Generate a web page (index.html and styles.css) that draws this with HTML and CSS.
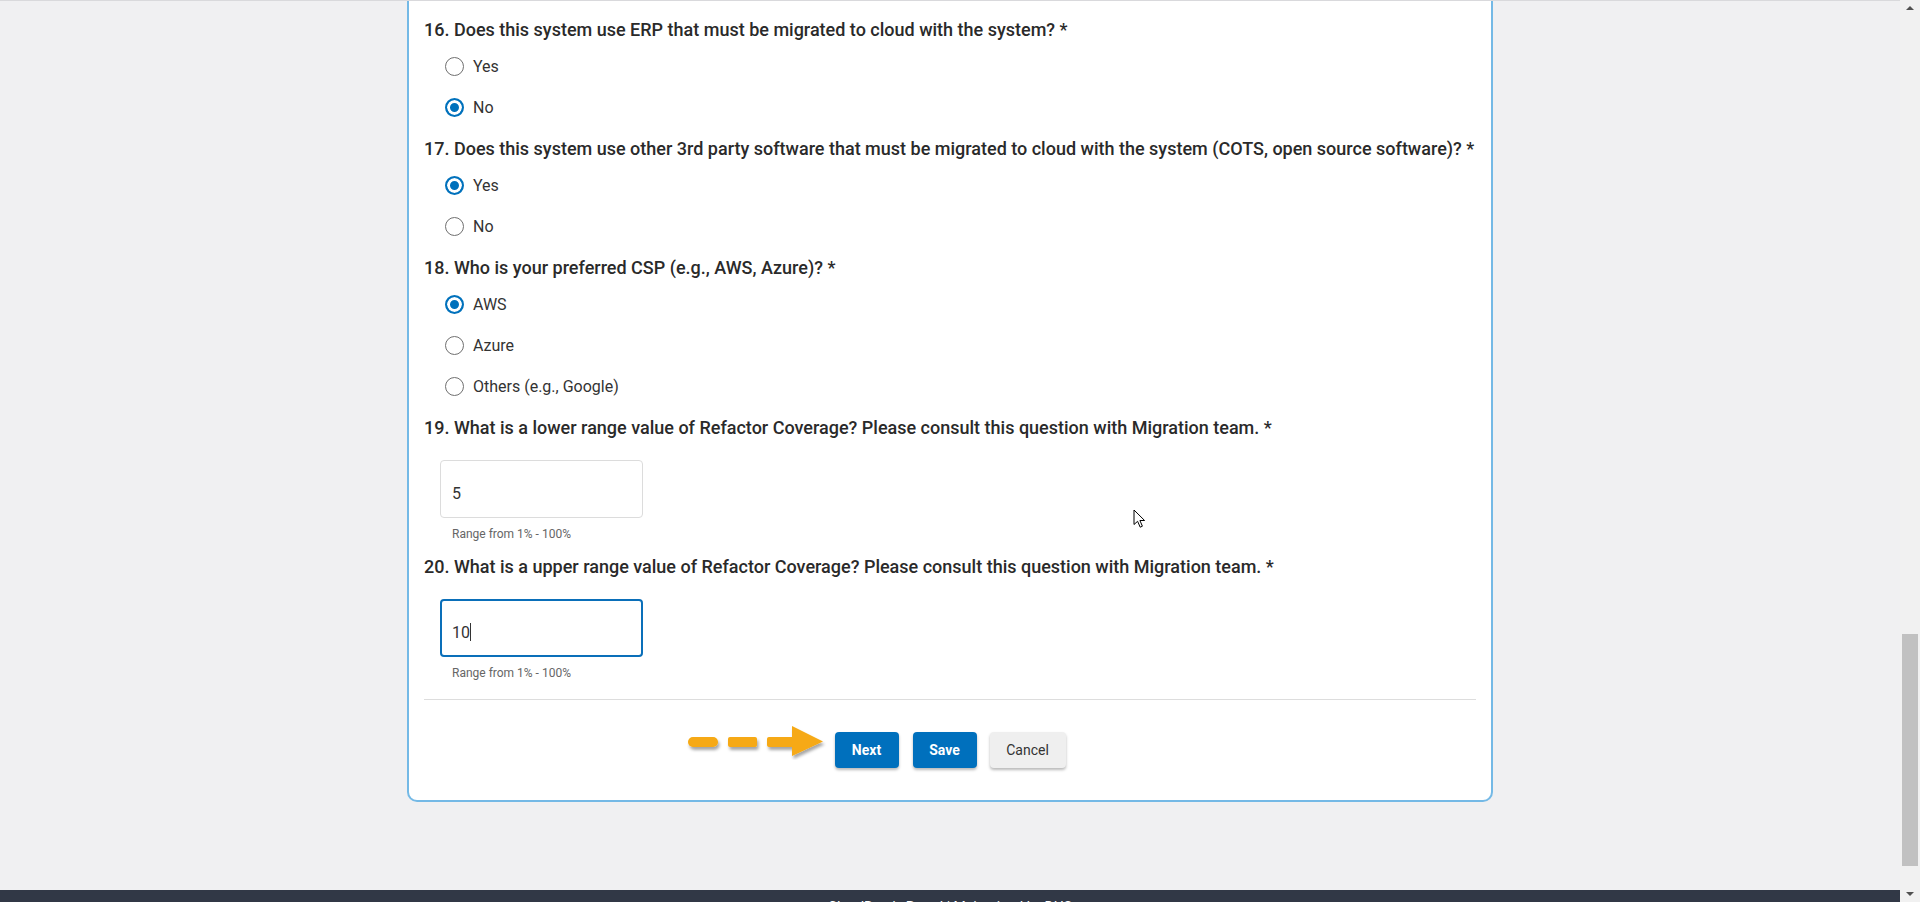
FILE: index.html
```html
<!DOCTYPE html>
<html lang="en">
<head>
<meta charset="utf-8">
<title>Questionnaire</title>
<link rel="stylesheet" href="styles.css">
</head>
<body>
<div class="viewport">
  <div class="page">
    <div class="topline"></div>
    <main class="main">
      <form class="card">
        <div class="question">
          <div class="q-label">16. Does this system use ERP that must be migrated to cloud with the system? *</div>
          <label class="option"><input type="radio" name="q16"><span>Yes</span></label>
          <label class="option"><input type="radio" name="q16" checked><span>No</span></label>
        </div>
        <div class="question">
          <div class="q-label">17. Does this system use other 3rd party software that must be migrated to cloud with the system (COTS, open source software)? *</div>
          <label class="option"><input type="radio" name="q17" checked><span>Yes</span></label>
          <label class="option"><input type="radio" name="q17"><span>No</span></label>
        </div>
        <div class="question">
          <div class="q-label">18. Who is your preferred CSP (e.g., AWS, Azure)? *</div>
          <label class="option"><input type="radio" name="q18" checked><span>AWS</span></label>
          <label class="option"><input type="radio" name="q18"><span>Azure</span></label>
          <label class="option"><input type="radio" name="q18"><span>Others (e.g., Google)</span></label>
        </div>
        <div class="question question-text q19">
          <div class="q-label">19. What is a lower range value of Refactor Coverage? Please consult this question with Migration team. *</div>
          <div class="textbox">5</div>
          <div class="hint">Range from 1% - 100%</div>
        </div>
        <div class="question question-text">
          <div class="q-label">20. What is a upper range value of Refactor Coverage? Please consult this question with Migration team. *</div>
          <div class="textbox focused">10<span class="caret"></span></div>
          <div class="hint">Range from 1% - 100%</div>
        </div>
        <div class="divider"></div>
        <div class="actions">
          <svg class="pointer-arrow" width="140" height="36" viewBox="0 0 140 36" aria-hidden="true">
            <defs>
              <filter id="sh" x="-10%" y="-30%" width="130%" height="180%">
                <feDropShadow dx="1.5" dy="3" stdDeviation="1.6" flood-color="#000" flood-opacity="0.35"/>
              </filter>
            </defs>
            <g fill="#f6a912" filter="url(#sh)">
              <rect x="1" y="13" width="30" height="10" rx="5"/>
              <rect x="41" y="13" width="29" height="10" rx="2"/>
              <rect x="80" y="13" width="28" height="10" rx="2"/>
              <path d="M105 2 L136 17.5 L105 32 Z"/>
            </g>
          </svg>
          <button type="button" class="btn btn-primary">Next</button>
          <button type="button" class="btn btn-primary">Save</button>
          <button type="button" class="btn btn-secondary">Cancel</button>
        </div>
        <svg class="cursor" width="14" height="20" viewBox="0 0 14 20" aria-hidden="true">
          <path d="M1 1 L1 15.5 L4.6 12.3 L7.2 18.2 L9.4 17.2 L6.9 11.5 L11.6 11.5 Z" fill="#fff" stroke="#000" stroke-width="1" stroke-linejoin="miter"/>
        </svg>
      </form>
    </main>
    <footer class="footer">CloudReady Portal | Maintained by DHS</footer>
  </div>
  <div class="scrollbar">
    <div class="sb-arrow sb-up"></div>
    <div class="sb-track"><div class="sb-thumb"></div></div>
    <div class="sb-arrow sb-down"></div>
  </div>
</div>
</body>
</html>
```

FILE: styles.css
```css
* { box-sizing: border-box; }

html, body {
  margin: 0;
  padding: 0;
  height: 902px;
  overflow: hidden;
  background: #f0f0f2;
  font-family: Roboto, "Liberation Sans", Arial, sans-serif;
  color: #222;
}

.viewport {
  display: flex;
  height: 902px;
}

.page {
  flex: 1;
  display: flex;
  flex-direction: column;
  min-width: 0;
}

.topline {
  height: 1px;
  background: #d9d9dc;
  flex: none;
}

.main {
  display: flex;
  justify-content: center;
  flex: none;
}

.card {
  position: relative;
  width: 1086px;
  margin: 0 0 88px;
  background: #fff;
  border: 2px solid #74b9e6;
  border-top: none;
  border-radius: 0 0 10px 10px;
  padding: 17px 15px 32px;
}

.question {
  margin-bottom: 9px;
}

.q-label {
  font-size: 18px;
  line-height: 24px;
  font-weight: 500;
  color: #2a2a2a;
  margin-bottom: 4px;
}

.option {
  display: flex;
  align-items: center;
  height: 41px;
  padding-left: 21px;
  font-size: 16px;
  color: #333;
}

.option input {
  appearance: none;
  -webkit-appearance: none;
  margin: 0 9px 0 0;
  width: 19px;
  height: 19px;
  border-radius: 50%;
  border: 1.5px solid #6f6f6f;
  background: #fff;
  flex: none;
}

.option input:checked {
  border: 2px solid #0071bc;
  background: #0071bc;
  box-shadow: inset 0 0 0 3px #fff;
}

.question-text .q-label {
  margin-bottom: 20px;
}

.q19 {
  margin-bottom: 14px;
}

.textbox {
  display: flex;
  align-items: center;
  margin-left: 16px;
  width: 203px;
  height: 58px;
  padding: 8px 0 0 11px;
  border: 1px solid #dcdcdc;
  border-radius: 4px;
  font-size: 16px;
  color: #333;
  background: #fff;
}

.textbox.focused {
  border: 2px solid #0a6fb9;
  padding: 8px 0 0 10px;
}

.caret {
  display: inline-block;
  width: 1px;
  height: 18px;
  background: #333;
}

.hint {
  margin: 9px 0 0 28px;
  font-size: 12px;
  line-height: 14px;
  color: #666;
}

.question-text:last-of-type {
  margin-bottom: 0;
}

.divider {
  height: 1px;
  background: #dddddd;
  margin-top: 19px;
}

.actions {
  position: relative;
  display: flex;
  justify-content: center;
  gap: 14px;
  margin-top: 32px;
}

.btn {
  height: 36px;
  border: none;
  border-radius: 4px;
  font-family: Roboto, "Liberation Sans", Arial, sans-serif;
  font-size: 14px;
  box-shadow: 0 2px 3px rgba(0, 0, 0, 0.28);
  padding: 0;
}

.btn-primary {
  width: 64px;
  background: #0070bd;
  color: #fff;
  font-weight: 700;
}

.btn-secondary {
  width: 76px;
  margin-left: -1px;
  background: #efefef;
  color: #333;
}

.pointer-arrow {
  position: absolute;
  left: 263px;
  top: -8px;
}

.cursor {
  position: absolute;
  left: 724px;
  top: 508px;
}

.footer {
  height: 40px;
  background: #313846;
  color: #fff;
  font-size: 14px;
  text-align: center;
  padding-top: 9px;
  flex: none;
}

.scrollbar {
  width: 20px;
  flex: none;
  display: flex;
  flex-direction: column;
  background: #f1f1f1;
}

.sb-arrow {
  height: 16px;
  flex: none;
  display: flex;
  justify-content: center;
  align-items: center;
}

.sb-up::before {
  content: "";
  border-left: 4.5px solid transparent;
  border-right: 4.5px solid transparent;
  border-bottom: 4.5px solid #505050;
}

.sb-down::before {
  content: "";
  border-left: 4.5px solid transparent;
  border-right: 4.5px solid transparent;
  border-top: 4.5px solid #505050;
}

.sb-track {
  flex: 1;
  display: flex;
  flex-direction: column;
  justify-content: flex-end;
  padding: 0 2px 20px 2px;
}

.sb-thumb {
  height: 232px;
  background: #c1c1c1;
}
```
